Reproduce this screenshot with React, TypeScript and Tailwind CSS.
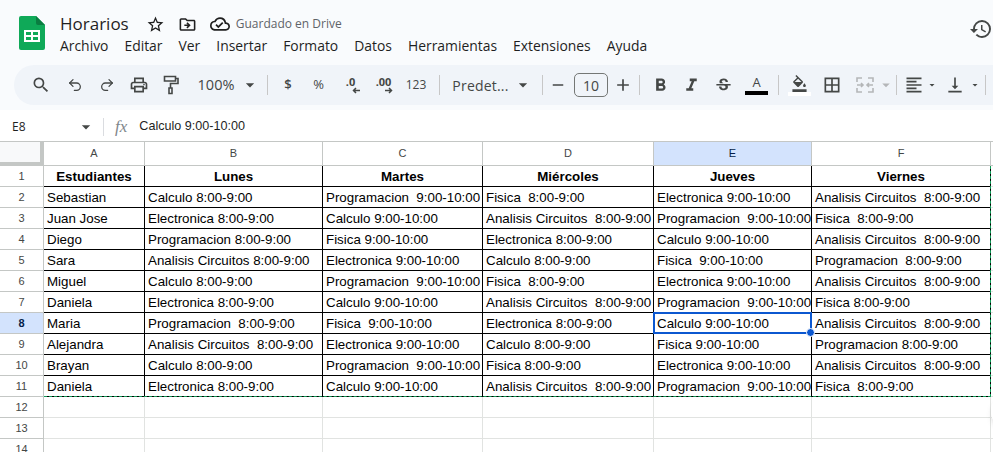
import type { ReactNode } from "react";
import { Redo2, Undo2 } from "lucide-react";
import {
  MdArrowDropDown,
  MdBorderAll,
  MdFormatAlignLeft,
  MdFormatBold,
  MdFormatColorFill,
  MdFormatItalic,
  MdHistory,
  MdOutlineCloudDone,
  MdOutlineDriveFileMove,
  MdOutlinePrint,
  MdSearch,
  MdStarBorder,
  MdStrikethroughS,
  MdVerticalAlignBottom,
  MdAdd,
  MdRemove,
} from "react-icons/md";

const menus = ["Archivo", "Editar", "Ver", "Insertar", "Formato", "Datos", "Herramientas", "Extensiones", "Ayuda"];

const columns = ["A", "B", "C", "D", "E", "F"];

const rows = [
  ["Estudiantes", "Lunes", "Martes", "Miércoles", "Jueves", "Viernes"],
  ["Sebastian", "Calculo 8:00-9:00", "Programacion  9:00-10:00", "Fisica  8:00-9:00", "Electronica 9:00-10:00", "Analisis Circuitos  8:00-9:00"],
  ["Juan Jose", "Electronica 8:00-9:00", "Calculo 9:00-10:00", "Analisis Circuitos  8:00-9:00", "Programacion  9:00-10:00", "Fisica  8:00-9:00"],
  ["Diego", "Programacion 8:00-9:00", "Fisica 9:00-10:00", "Electronica 8:00-9:00", "Calculo 9:00-10:00", "Analisis Circuitos  8:00-9:00"],
  ["Sara", "Analisis Circuitos 8:00-9:00", "Electronica 9:00-10:00", "Calculo 8:00-9:00", "Fisica  9:00-10:00", "Programacion  8:00-9:00"],
  ["Miguel", "Calculo 8:00-9:00", "Programacion  9:00-10:00", "Fisica  8:00-9:00", "Electronica 9:00-10:00", "Analisis Circuitos  8:00-9:00"],
  ["Daniela", "Electronica 8:00-9:00", "Calculo 9:00-10:00", "Analisis Circuitos  8:00-9:00", "Programacion  9:00-10:00", "Fisica 8:00-9:00"],
  ["Maria", "Programacion  8:00-9:00", "Fisica  9:00-10:00", "Electronica 8:00-9:00", "Calculo 9:00-10:00", "Analisis Circuitos  8:00-9:00"],
  ["Alejandra", "Analisis Circuitos  8:00-9:00", "Electronica 9:00-10:00", "Calculo 8:00-9:00", "Fisica 9:00-10:00", "Programacion 8:00-9:00"],
  ["Brayan", "Calculo 8:00-9:00", "Programacion  9:00-10:00", "Fisica 8:00-9:00", "Electronica 9:00-10:00", "Analisis Circuitos  8:00-9:00"],
  ["Daniela", "Electronica 8:00-9:00", "Calculo 9:00-10:00", "Analisis Circuitos  8:00-9:00", "Programacion  9:00-10:00", "Fisica  8:00-9:00"],
];

function SheetsLogo() {
  return (
    <svg width="26" height="34" viewBox="0 0 26 34" className="shrink-0">
      <path d="M2 0H17L26 9V32a2 2 0 0 1-2 2H2a2 2 0 0 1-2-2V2a2 2 0 0 1 2-2z" fill="#0fa958" />
      <path d="M17 0L26 9H19a2 2 0 0 1-2-2z" fill="#0a7d41" />
      <path d="M5 14H21V26H5zM7 16V19H12V16zM14 16V19H19V16zM7 21V24H12V21zM14 21V24H19V21z" fill="#fff" fillRule="evenodd" />
    </svg>
  );
}

function MergeIcon() {
  return (
    <svg width="18" height="18" viewBox="0 0 18 18" fill="none" stroke="#b4b6b8" strokeWidth="1.6">
      <path d="M1 6V2H6M12 2H17V6M1 12V16H6M12 16H17V12" />
      <path d="M1 9H7M5 7L7 9L5 11M17 9H11M13 7L11 9L13 11" />
    </svg>
  );
}

function PaintIcon() {
  return (
    <svg width="16" height="20" viewBox="0 0 16 20" fill="none" stroke="#444746" strokeWidth="1.6">
      <path d="M1.5 1.5H12.5V6H1.5z" />
      <path d="M12.5 3.5H15V8.5H7.5V13" />
      <path d="M6 13H9V18.5H6z" />
    </svg>
  );
}

// the small arrow under the decimal buttons
function DecimalArrow({ flip = false }: { flip?: boolean }) {
  return (
    <svg width="8" height="7" viewBox="0 0 8 7" className={`ml-[10px] ${flip ? "-scale-x-100" : ""}`} fill="none" stroke="#444746" strokeWidth="1.5">
      <path d="M8 3.5H1.5M4 1L1.5 3.5L4 6" />
    </svg>
  );
}

function Tool({ w = "w-[32px]", children }: { w?: string; children: ReactNode }) {
  return <div className={`${w} flex h-full shrink-0 items-center justify-center text-[#444746]`}>{children}</div>;
}

function Sep() {
  return <div className="mx-[5px] h-[20px] w-px shrink-0 bg-[#c7c7c7]" />;
}

function Toolbar() {
  return (
    <div className="ml-[14px] flex h-[40px] items-center overflow-hidden rounded-l-[20px] bg-[#f0f4f9] pl-[11px]">
      <Tool><MdSearch size={20} /></Tool>
      <div className="w-[2px] shrink-0" />
      <Tool><Undo2 size={16} strokeWidth={1.9} /></Tool>
      <Tool><Redo2 size={16} strokeWidth={1.9} /></Tool>
      <Tool><MdOutlinePrint size={20} /></Tool>
      <Tool w="w-[31px]"><PaintIcon /></Tool>
      <div className="w-[8px] shrink-0" />
      <Tool w="w-[44px]"><span className="text-[14.5px]">100%</span></Tool>
      <Tool w="w-[24px]"><MdArrowDropDown size={20} /></Tool>
      <Sep />
      <Tool w="w-[30px]"><span className="text-[13px] font-semibold">$</span></Tool>
      <Tool w="w-[31px]"><span className="text-[13px]">%</span></Tool>
      <Tool w="w-[33px]">
        <div className="flex flex-col items-center text-[11px] leading-[11px] font-bold">
          <span>.0</span>
          <DecimalArrow />
        </div>
      </Tool>
      <Tool w="w-[33px]">
        <div className="flex flex-col items-center text-[11px] leading-[11px] font-bold">
          <span>.00</span>
          <DecimalArrow flip />
        </div>
      </Tool>
      <Tool><span className="text-[12px]">123</span></Tool>
      <div className="w-[2px] shrink-0" />
      <Sep />
      <div className="w-[7px] shrink-0" />
      <Tool w="w-[57px]"><span className="text-[14px] tracking-[0.2px]">Predet...</span></Tool>
      <Tool w="w-[28px]"><MdArrowDropDown size={20} /></Tool>
      <Sep />
      <Tool w="w-[20px]"><MdRemove size={18} /></Tool>
      <div className="w-[6px] shrink-0" />
      <div className="flex h-[24px] w-[34px] shrink-0 items-center justify-center rounded-[5px] border border-[#747775] text-[14px] text-[#444746]">10</div>
      <div className="w-[4px] shrink-0" />
      <Tool w="w-[22px]"><MdAdd size={20} /></Tool>
      <Sep />
      <Tool w="w-[30px]"><MdFormatBold size={21} /></Tool>
      <Tool><MdFormatItalic size={21} /></Tool>
      <Tool w="w-[33px]"><MdStrikethroughS size={19} /></Tool>
      <Tool w="w-[33px]">
        <div className="flex flex-col items-center">
          <span className="text-[13px] leading-[15px]">A</span>
          <div className="mt-[1px] h-[4px] w-[23px] bg-black" />
        </div>
      </Tool>
      <Sep />
      <Tool w="w-[30px]">
        <div className="flex flex-col items-center">
          <MdFormatColorFill size={17} />
          <div className="h-[4px] w-[23px] bg-white" />
        </div>
      </Tool>
      <Tool w="w-[36px]"><MdBorderAll size={20} /></Tool>
      <Tool w="w-[30px]"><MergeIcon /></Tool>
      <Tool w="w-[11px]"><span className="text-[#b4b6b8]"><MdArrowDropDown size={18} /></span></Tool>
      <Sep />
      <Tool w="w-[24px]"><MdFormatAlignLeft size={20} /></Tool>
      <Tool w="w-[12px]"><MdArrowDropDown size={18} /></Tool>
      <div className="w-[3px] shrink-0" />
      <Tool w="w-[28px]"><MdVerticalAlignBottom size={20} /></Tool>
      <Tool w="w-[12px]"><MdArrowDropDown size={18} /></Tool>
      <div className="w-[4px] shrink-0" />
      <div className="h-[20px] w-px shrink-0 bg-[#c7c7c7]" />
      <div className="ml-[7px] h-[14px] w-px shrink-0 bg-[#444746]" />
    </div>
  );
}

function Sheet() {
  const grid = "grid-cols-[44px_101px_178px_160px_171px_158px_179px_1fr] grid-rows-[24px_repeat(14,21px)]";
  return (
    <div className={`relative grid ${grid} border-t border-[#c4c7c5] bg-white font-['Liberation_Sans',Arial,sans-serif] text-[12px] text-black`}>
      <div className="border-r-[4px] border-b-[4px] border-[#c4c7c5] bg-[#f8f9fa]" />
      {columns.map((c) => (
        <div
          key={c}
          className={`flex items-center justify-center border-r border-b border-[#c4c7c5] text-[11px] ${
            c === "E" ? "bg-[#d3e3fd] text-[#041e49]" : "bg-white text-[#444746]"
          }`}
        >
          {c}
        </div>
      ))}
      <div className="border-b border-[#c4c7c5] bg-white" />

      {Array.from({ length: 14 }).map((_, i) => {
        const row = rows[i];
        const num = i + 1;
        return (
          <div key={num} className="contents">
            <div
              className={`flex items-center justify-center border-r border-b border-[#c4c7c5] text-[11px] ${
                num === 8 ? "bg-[#d3e3fd] font-bold text-[#041e49]" : "bg-white text-[#444746]"
              }`}
            >
              {num}
            </div>
            {columns.map((c, j) => {
              const text = row ? row[j] : "";
              const head = num === 1;
              const selected = num === 8 && c === "E";
              return (
                <div
                  key={c}
                  className={`relative flex items-center border-r border-b px-[3px] pt-[2px] text-[13.33px] whitespace-pre ${
                    row ? "border-black" : "border-[#e1e3e1]"
                  } ${head ? "justify-center font-bold" : ""}`}
                >
                  {text}
                  {selected && (
                    <div className="absolute -top-px -right-px -bottom-px -left-px z-20 border-2 border-[#0b57d0]">
                      <div className="absolute -right-[5px] -bottom-[5px] h-[9px] w-[9px] rounded-full border border-white bg-[#0b57d0]" />
                    </div>
                  )}
                </div>
              );
            })}
            <div className="border-b border-[#e1e3e1]" />
          </div>
        );
      })}

      <div className="pointer-events-none absolute inset-0 z-10 col-start-2 col-end-8 row-start-2 row-end-13 border-r border-b border-dashed border-[#0f9d58]" />
      <div className="absolute top-[256px] -right-[14px] z-10 h-[26px] w-[16px] rounded-l-[10px] bg-white shadow-md" />
    </div>
  );
}

export default function App() {
  return (
    <div className="h-[452px] w-[993px] overflow-hidden bg-[#f9fbfd] font-['Open_Sans',Roboto,sans-serif]">
      <div className="flex h-[65px]">
        <div className="pt-[16px] pl-[19px]"><SheetsLogo /></div>
        <div className="flex min-w-0 flex-1 flex-col pt-[13px] pl-[15px]">
          <div className="flex h-[22px] items-center text-[#1f1f1f]">
            <span className="text-[17px] leading-[22px]">Horarios</span>
            <span className="ml-[17px]"><MdStarBorder size={19} /></span>
            <span className="ml-[13px]"><MdOutlineDriveFileMove size={19} /></span>
            <span className="ml-[13px]"><MdOutlineCloudDone size={20} /></span>
            <span className="ml-[6px] text-[12px] text-[#5f6368]">Guardado en Drive</span>
          </div>
          <div className="mt-[1px] flex gap-[16px] text-[13.9px] text-[#1f1f1f]">
            {menus.map((m) => (
              <span key={m}>{m}</span>
            ))}
          </div>
        </div>
        <div className="pt-[17px] text-[#444746]"><MdHistory size={24} /></div>
      </div>

      <Toolbar />

      <div className="mt-[5px] flex h-[31px] items-center bg-white pt-[2px] text-[12px] text-[#1f1f1f]">
        <span className="w-[76px] pl-[12px]">E8</span>
        <span className="text-[#444746]"><MdArrowDropDown size={20} /></span>
        <div className="ml-[7px] h-[18px] w-px bg-[#dadce0]" />
        <span className="ml-[11px] font-['Liberation_Serif',serif] text-[17px] text-[#80868b] italic">fx</span>
        <span className="ml-[12px] font-['Liberation_Sans',Arial,sans-serif] text-[12.6px]">Calculo 9:00-10:00</span>
      </div>

      <Sheet />
    </div>
  );
}
